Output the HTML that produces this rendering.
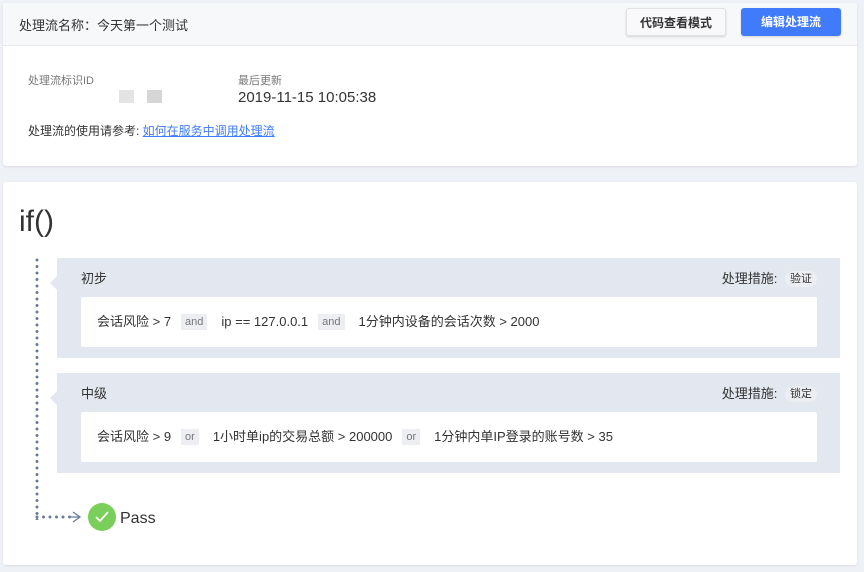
<!DOCTYPE html>
<html><head><meta charset="utf-8"><style>
*{margin:0;padding:0;box-sizing:border-box}
body{width:864px;height:572px;background:#eef1f6;font-family:"Liberation Sans","Noto Sans CJK SC",sans-serif;color:#333;position:relative;overflow:hidden}
.card{position:absolute;left:3px;width:854px;background:#fff;border-radius:3px;box-shadow:0 1px 2px rgba(0,0,0,.08)}
.abs{position:absolute}
.hd{position:absolute;left:0;top:0;width:854px;height:43px;background:#f7f8fa;border-bottom:1px solid #e4e7ec;border-radius:3px 3px 0 0}
.btn{position:absolute;top:5px;height:28px;border-radius:3px;font-size:12px;font-weight:bold;text-align:center;line-height:28px}
.step{position:absolute;left:57px;width:783px;height:100px;background:#e3e7ef}
.step:before{content:"";position:absolute;left:-7px;top:18px;border:7px solid transparent;border-left:0;border-right-color:#e3e7ef}
.inner{position:absolute;left:24px;top:39px;width:736px;height:50px;background:#fff;border-radius:2px;font-size:13px;line-height:50px;padding-left:16px;white-space:pre}
.op{display:inline-block;background:#eceef2;color:#777;font-size:11px;line-height:16px;padding:0 4px;margin:0 14px 0 10px;vertical-align:1px}
.title{position:absolute;left:24px;top:10px;font-size:13px}
.meas{position:absolute;right:23px;top:10px;font-size:13px}
.tag{display:inline-block;background:#eceef2;border-radius:9px;font-size:11px;line-height:16px;padding:0 5px;margin-left:4px;vertical-align:1px}
.dv{position:absolute;left:35px;top:258px;width:4px;height:262px;background-image:radial-gradient(circle at 2px 2px,#6b7a99 1.3px,transparent 1.7px);background-size:4px 6.5px}
.dh{position:absolute;left:35px;top:515px;width:38px;height:4px;background-image:radial-gradient(circle at 2px 2px,#6b7a99 1.3px,transparent 1.7px);background-size:6.5px 4px}
</style></head><body>
<div class="card" style="top:3px;height:163px">
 <div class="hd"></div>
 <div class="abs" style="left:16px;top:12px;font-size:13px">处理流名称：今天第一个测试</div>
 <div class="btn" style="left:623px;width:100px;background:#f9f9fb;border:1px solid #e0e2e6;box-shadow:0 1px 2px rgba(0,0,0,.15);color:#333">代码查看模式</div>
 <div class="btn" style="left:738px;width:100px;background:#3f7bfa;color:#fff;box-shadow:0 1px 2px rgba(0,0,0,.15)">编辑处理流</div>
 <div class="abs" style="left:25px;top:69px;font-size:11px;color:#777">处理流标识ID</div>
 <div class="abs" style="left:116px;top:87px;width:15px;height:13px;background:#e4e4e4"></div>
 <div class="abs" style="left:144px;top:87px;width:15px;height:13px;background:#d6d6d6"></div>
 <div class="abs" style="left:235px;top:69px;font-size:11px;color:#777">最后更新</div>
 <div class="abs" style="left:235px;top:86px;font-size:15px;color:#333">2019-11-15 10:05:38</div>
 <div class="abs" style="left:25px;top:119px;font-size:12px">处理流的使用请参考: <span style="color:#3f7bfa;text-decoration:underline">如何在服务中调用处理流</span></div>
</div>
<div class="card" style="top:182px;height:383px">
 <div class="abs" style="left:16px;top:23px;font-size:30px;color:#333">if()</div>
</div>
<div class="dv"></div><div class="dh"></div>
<svg class="abs" style="left:0;top:0" width="864" height="572">
 <path d="M73 512 L80 517 L73 522 M71 517 H80" fill="none" stroke="#6b7a99" stroke-width="1.3"/>
 <circle cx="102" cy="517" r="14" fill="#79cf5a"/>
 <path d="M96 517 L100 521 L108 512" fill="none" stroke="#fff" stroke-width="1.8"/>
 <text x="120" y="523" font-family="Liberation Sans" font-size="16" fill="#333">Pass</text>
</svg>
<div class="step" style="top:258px">
 <div class="title">初步</div>
 <div class="meas">处理措施: <span class="tag">验证</span></div>
 <div class="inner">会话风险 &gt; 7<span class="op">and</span>ip == 127.0.0.1<span class="op">and</span>1分钟内设备的会话次数 &gt; 2000</div>
</div>
<div class="step" style="top:373px">
 <div class="title">中级</div>
 <div class="meas">处理措施: <span class="tag">锁定</span></div>
 <div class="inner">会话风险 &gt; 9<span class="op">or</span>1小时单ip的交易总额 &gt; 200000<span class="op">or</span>1分钟内单IP登录的账号数 &gt; 35</div>
</div>
</body></html>
